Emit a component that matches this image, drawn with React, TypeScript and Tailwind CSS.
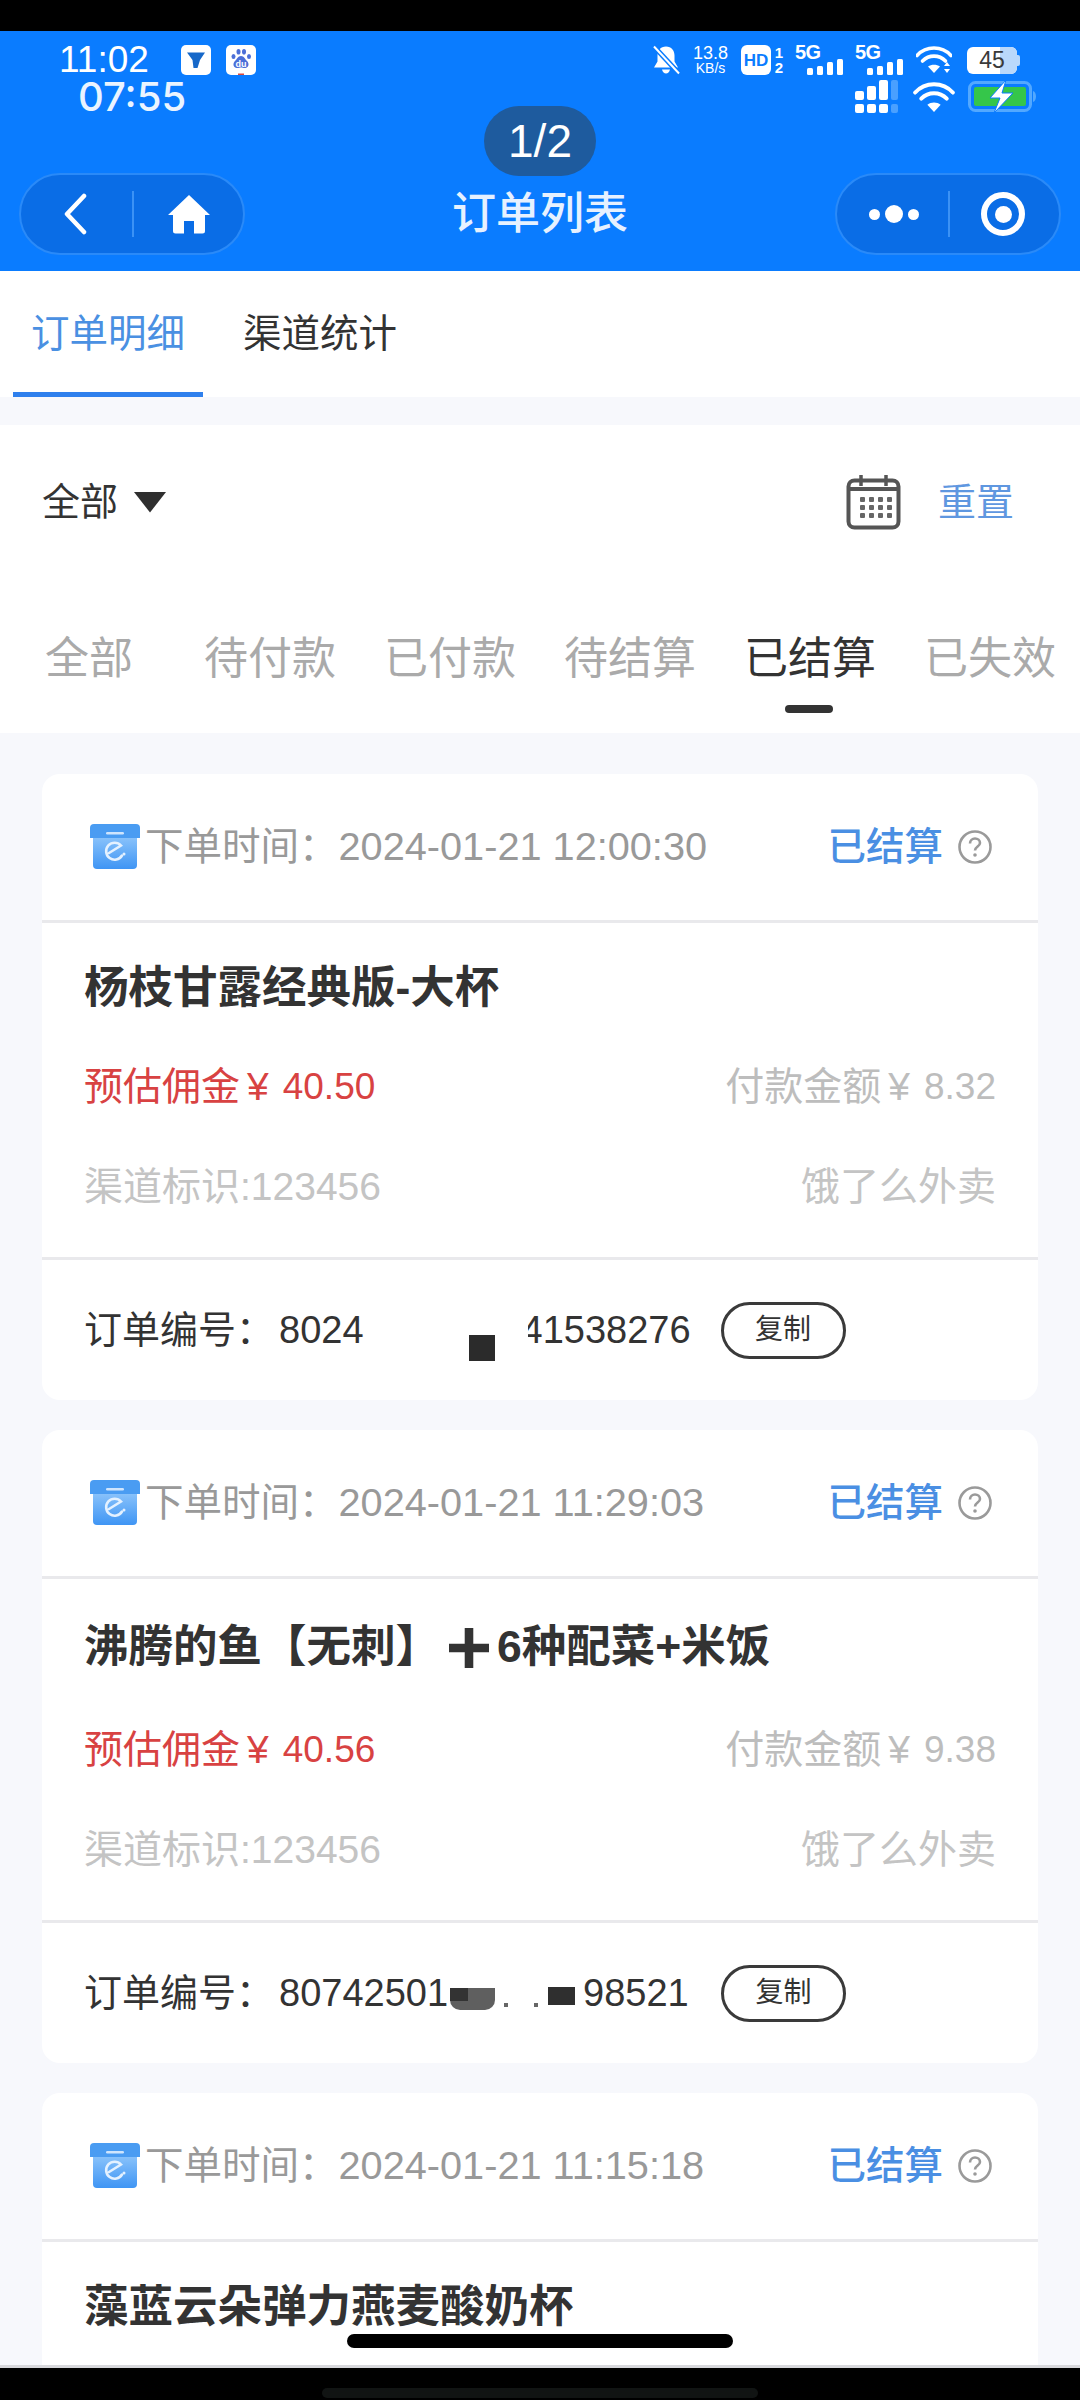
import React from "react";

function Paw() {
  return (
    <svg width="30" height="30" viewBox="0 0 30 30">
      <rect width="30" height="30" rx="5" fill="#fff" />
      <g fill="#4c6fd8">
        <ellipse cx="7.500" cy="11.500" rx="2" ry="2.600" />
        <ellipse cx="12.500" cy="6.800" rx="2" ry="2.800" />
        <ellipse cx="18" cy="6.800" rx="2" ry="2.800" />
        <ellipse cx="23" cy="11.500" rx="2" ry="2.600" />
        <path d="M15 11c3 0 4 3 6 5s2.500 6-1.500 7c-2 .4-3-.5-4.500-.5s-2.500.9-4.500.5c-4-1-3.500-5-1.500-7s3-5 6-5z" />
      </g>
      <text x="15" y="21.500" textAnchor="middle" fontSize="9" fontWeight="700" fill="#fff" fontFamily="Liberation Sans">du</text>
      <rect x="12" y="28.500" width="6" height="1.500" fill="#d9483e" />
    </svg>
  );
}

function Funnel() {
  return (
    <svg width="30" height="30" viewBox="0 0 30 30">
      <rect width="30" height="30" rx="5" fill="#fff" />
      <path d="M6 7.500h18l-5 7.500-2.500 8H12.500l-1-8z" fill="#1668c9" />
    </svg>
  );
}

function MutedBell() {
  return (
    <svg width="30" height="30" viewBox="0 0 30 30">
      <path d="M15 1.500c5.500 0 8.500 4 8.500 9v6l3.500 6H3l3.500-6v-6c0-5 3-9 8.500-9z" fill="#fff" />
      <path d="M11 24.500c.6 2.500 2.200 4 4 4s3.400-1.500 4-4z" fill="#fff" />
      <path d="M3 1.500 28 28.500" stroke="#0a7cff" strokeWidth="5" />
      <path d="M3 1.500 28 28.500" stroke="#fff" strokeWidth="2" />
    </svg>
  );
}

function FiveG() {
  return (
    <div className="relative w-[48px] h-[30px]">
      <span className="absolute left-0 top-[-3px] text-[20px] leading-[20px] font-bold text-white tracking-[-0.5px]">5G</span>
      <svg className="absolute left-[12px] top-[14px]" width="36" height="16" viewBox="0 0 36 16" fill="#fff">
        <rect x="0" y="9" width="6" height="7" rx="1.500" />
        <rect x="10" y="7" width="6" height="9" rx="1.500" />
        <rect x="20" y="3" width="6" height="13" rx="1.500" />
        <rect x="30" y="0" width="6" height="16" rx="1.500" />
      </svg>
    </div>
  );
}

function Wifi({ w, h, tri }: { w: number; h: number; tri?: boolean }) {
  return (
    <svg width={w} height={h} viewBox="0 0 36 28" fill="none" stroke="#fff" strokeWidth="3.600">
      <path d="M1 9.500C10-.5 26-.5 35 9.500" strokeLinecap="round" />
      <path d="M6.500 15c6.500-6.500 16.500-6.500 23 0" strokeLinecap="round" />
      <path d="M18 27l-6-6.500c3.500-2.500 8.500-2.500 12 0z" fill="#fff" stroke="none" />
      {tri && <path d="M28 20l3-4 3 4zM28 23h6l-3 4z" fill="#fff" stroke="none" />}
    </svg>
  );
}

function Signal() {
  return (
    <svg width="44" height="34" viewBox="0 0 44 34" fill="#fff">
      <rect x="0" y="11" width="9" height="9" rx="2" />
      <rect x="12" y="6" width="9" height="14" rx="2" />
      <rect x="24" y="0" width="9" height="20" rx="2" />
      <rect x="36" y="0" width="7" height="20" rx="2" fill="#4aa0ff" />
      <rect x="0" y="24" width="9" height="9" rx="2" />
      <rect x="12" y="24" width="9" height="9" rx="2" />
      <rect x="24" y="24" width="9" height="9" rx="2" />
      <rect x="36" y="24" width="7" height="9" rx="2" fill="#4aa0ff" />
    </svg>
  );
}

function ChargeBattery() {
  return (
    <svg width="72" height="34" viewBox="0 0 72 34">
      <rect x="1.500" y="2.500" width="61" height="28" rx="6" fill="none" stroke="#52a8ff" strokeWidth="3" />
      <rect x="6" y="7" width="52" height="19" rx="2" fill="#35c64a" />
      <path d="M65 11c4 1 4 10 0 11z" fill="#52a8ff" />
      <path d="M38 0 22 18h10l-6 15 19-20H34z" fill="#fff" stroke="#0a7cff" strokeWidth="1" />
    </svg>
  );
}

function Box() {
  return (
    <svg width="50" height="46" viewBox="0 0 50 46" className="shrink-0">
      <defs>
        <linearGradient id="boxg" x1="0" y1="0" x2="0" y2="1">
          <stop offset="0" stopColor="#8cc4fb" />
          <stop offset="1" stopColor="#3f95f4" />
        </linearGradient>
      </defs>
      <path d="M3 12h44v29a4 4 0 0 1-4 4H7a4 4 0 0 1-4-4z" fill="url(#boxg)" />
      <path d="M4 0h42a4 4 0 0 1 4 4v10H0V4a4 4 0 0 1 4-4z" fill="#4a9cf2" />
      <rect x="16" y="8" width="18" height="2.500" rx="1.200" fill="#cfe5fd" />
      <path d="M32 31.500a8.500 8.500 0 1 1-1-10L19 29" fill="none" stroke="#e4f1ff" strokeWidth="2.600" strokeLinecap="round" />
      <circle cx="34" cy="30" r="1.500" fill="#e4f1ff" />
    </svg>
  );
}

function Help() {
  return (
    <svg width="36" height="36" viewBox="0 0 36 36" className="shrink-0 block">
      <circle cx="18" cy="18" r="15.500" fill="none" stroke="#9a9a9a" strokeWidth="2.600" />
      <path d="M13 14.500c0-3 2.300-5 5-5s5 2 5 4.500c0 3.500-5 3.500-5 7.500" fill="none" stroke="#9a9a9a" strokeWidth="2.600" />
      <circle cx="18" cy="26" r="1.800" fill="#9a9a9a" />
    </svg>
  );
}

function Calendar() {
  return (
    <svg width="56" height="56" viewBox="0 0 56 56" fill="none" className="block">
      <rect x="2.500" y="6.500" width="50" height="47" rx="6" stroke="#555" strokeWidth="4" />
      <path d="M2.500 15h50" stroke="#555" strokeWidth="4" />
      <path d="M15 1v11M40 1v11" stroke="#555" strokeWidth="3.500" />
      <g fill="#666">
        {[23, 31, 39].map((y) =>
          [14, 23, 32, 41].map((x) => <rect key={`${x}-${y}`} x={x} y={y} width="5" height="5" rx="1" />)
        )}
      </g>
    </svg>
  );
}

type Order = {
  time: string;
  title: React.ReactNode;
  commission?: string;
  pay?: string;
  order?: React.ReactNode;
  titleH: string;
};

function CopyBtn() {
  return (
    <div className="w-[125px] h-[57px] rounded-full border-[3px] border-[#3a3a3a] flex items-center justify-center text-[28px] text-[#333] shrink-0">
      复制
    </div>
  );
}

function Money({ label, amount }: { label: string; amount: string }) {
  return (
    <span className="flex items-center">
      <span>{label}</span>
      <span className="ml-[7px] mr-[14px]">¥</span>
      <span className="text-[37px]">{amount}</span>
    </span>
  );
}

function Card({ o, partial }: { o: Order; partial?: boolean }) {
  return (
    <div className={partial ? "bg-white rounded-[18px] h-[400px] shrink-0" : "bg-white rounded-[18px] shrink-0"}>
      <div className="h-[149px] border-b-[3px] border-[#e9e9ec] flex items-center pl-[48px] pr-[45px]">
        <Box />
        <span className="ml-[5px] text-[38.500px] text-[#999]">下单时间：</span>
        <span className="text-[39.700px] text-[#999] ml-[1px]">{o.time}</span>
        <span className="ml-auto text-[38.500px] text-[#4a8fe3] font-medium">已结算</span>
        <span className="ml-[14px]"><Help /></span>
      </div>
      <div className="pl-[42px] pr-[42px]">
        <div className={`${o.titleH} pt-[2px] flex items-center text-[44.500px] font-semibold text-[#333] whitespace-nowrap`}>{o.title}</div>
        {!partial && (
          <>
            <div className="h-[72px] flex items-center justify-between text-[39px]">
              <span className="text-[#d84242]"><Money label="预估佣金" amount={`40.${o.commission}`} /></span>
              <span className="text-[#bdbdbd]"><Money label="付款金额" amount={o.pay ?? ""} /></span>
            </div>
            <div className="h-[72px] mt-[28px] mb-[34px] flex items-center justify-between text-[39px] text-[#c4c4c4]">
              <span>渠道标识:123456</span>
              <span>饿了么外卖</span>
            </div>
          </>
        )}
      </div>
      {!partial && (
        <div className="h-[143px] border-t-[3px] border-[#e9e9ec] flex items-center pl-[42px] text-[38px] text-[#333]">
          <span>订单编号：</span>
          {o.order}
        </div>
      )}
    </div>
  );
}

export default function App() {
  return (
    <div className="relative w-[1080px] h-[2400px] overflow-hidden flex flex-col bg-black [font-family:'Liberation_Sans','Noto_Sans_CJK_SC',sans-serif]">
      <div className="h-[31px] bg-black shrink-0" />

      {/* blue header */}
      <div className="relative h-[240px] bg-[#0a7cff] shrink-0 text-white">
        <div className="h-[30px] mt-[14px] flex items-center">
          <span className="ml-[59px] text-[37px] leading-[30px]">11:02</span>
          <span className="ml-[32px]"><Funnel /></span>
          <span className="ml-[15px]"><Paw /></span>
          <span className="ml-auto"><MutedBell /></span>
          <div className="ml-[11px] w-[37px] flex flex-col items-center leading-none">
            <span className="text-[18px] leading-[16px]">13.8</span>
            <span className="text-[14px] leading-[14px]">KB/s</span>
          </div>
          <div className="ml-[12px] w-[30px] h-[30px] rounded-[6px] bg-white flex items-center justify-center text-[#0a7cff] text-[17px] font-bold leading-none">HD</div>
          <div className="ml-[3px] w-[10px] flex flex-col items-center text-[15px] leading-[15px] font-bold">
            <span>1</span>
            <span>2</span>
          </div>
          <span className="ml-[11px]"><FiveG /></span>
          <span className="ml-[12px]"><FiveG /></span>
          <span className="ml-[13px]"><Wifi w={36} h={28} tri /></span>
          <div className="ml-[15px] mr-[60px] flex items-center">
            <div className="relative w-[50px] h-[27px] rounded-[6px] overflow-hidden bg-white flex items-center justify-center">
              <div className="absolute right-0 top-0 bottom-0 w-[17px] bg-[#b9d8fb]" />
              <span className="relative text-[#3a3a3a] text-[23px] leading-none">45</span>
            </div>
            <div className="w-[3px] h-[11px] rounded-r-[2px] bg-[#b9d8fb]" />
          </div>
        </div>
        <div className="h-[34px] mt-[5px] flex items-center">
          <span className="ml-[78px] text-[40px] leading-[34px] font-medium text-[#eaf4ff] [font-family:Inter,sans-serif]">07:55</span>
          <span className="ml-auto"><Signal /></span>
          <span className="ml-[14px]"><Wifi w={42} h={31} /></span>
          <span className="ml-[13px] mr-[40px]"><ChargeBattery /></span>
        </div>
        <div className="absolute left-[484px] top-[75px] w-[112px] h-[70px] rounded-full bg-[#1e5b9e] flex items-center justify-center text-[46px] leading-none">1/2</div>
        <div className="mt-[59px] h-[82px] flex items-center justify-between px-[19px]">
          <div className="w-[226px] h-[82px] rounded-full bg-[#0a6de6] border-[2px] border-[#2a8af8] flex items-center">
            <svg width="26" height="42" viewBox="0 0 26 42" className="ml-[41px]" fill="none">
              <path d="M22 3 5 21l17 18" stroke="#fff" strokeWidth="4.500" strokeLinecap="round" strokeLinejoin="round" />
            </svg>
            <div className="ml-[44px] w-[2px] h-[46px] bg-[#3b92f5]" />
            <svg width="44" height="40" viewBox="0 0 44 40" className="ml-[33px]">
              <path d="M22 1 43 21h-5v16a2.500 2.500 0 0 1-2.500 2.500H27V27h-10v12.500H8.500A2.500 2.500 0 0 1 6 37V21H1z" fill="#fff" />
            </svg>
          </div>
          <div className="text-[44px] leading-none font-medium text-[#e6f1ff]">订单列表</div>
          <div className="w-[226px] h-[82px] rounded-full bg-[#0a6de6] border-[2px] border-[#2a8af8] flex items-center">
            <div className="ml-[32px] flex items-center gap-[5px]">
              <div className="w-[11px] h-[11px] rounded-full bg-white" />
              <div className="w-[18px] h-[18px] rounded-full bg-white" />
              <div className="w-[11px] h-[11px] rounded-full bg-white" />
            </div>
            <div className="ml-[29px] w-[2px] h-[46px] bg-[#3b92f5]" />
            <div className="ml-[31px] w-[44px] h-[44px] rounded-full border-[6px] border-white flex items-center justify-center">
              <div className="w-[17px] h-[17px] rounded-full bg-white" />
            </div>
          </div>
        </div>
      </div>

      {/* page */}
      <div className="relative flex-1 min-h-0 overflow-hidden bg-[#f7f8fc] border-b-[3px] border-[#d8d8dc]">
        <div className="h-[126px] bg-white flex text-[38.500px] leading-none">
          <div className="ml-[13px] w-[190px] border-y-[5px] border-t-transparent border-b-[#2f80ed] flex items-center justify-center text-[#4a90e2]">订单明细</div>
          <div className="ml-[40px] flex items-center text-[#333]">渠道统计</div>
        </div>
        <div className="mt-[28px] bg-white">
          <div className="h-[154px] flex items-center pl-[42px] pr-[66px] text-[38px] text-[#333]">
            <span>全部</span>
            <svg width="34" height="22" viewBox="0 0 34 22" className="ml-[15px]">
              <path d="M1 1h32L17 21.500z" fill="#2f2f2f" />
            </svg>
            <span className="ml-auto"><Calendar /></span>
            <span className="ml-[36px] text-[#5f97e0]">重置</span>
          </div>
          <div className="h-[154px] pt-[6px] flex items-center pl-[45px] text-[44px] text-[#aaa] leading-none">
            <span>全部</span>
            <span className="ml-[71px]">待付款</span>
            <span className="ml-[48px]">已付款</span>
            <span className="ml-[48px]">待结算</span>
            <span className="relative ml-[48px] text-[#333]">
              已结算
              <span className="absolute left-[41px] top-[68px] w-[48px] h-[8px] rounded-full bg-[#333]" />
            </span>
            <span className="ml-[48px]">已失效</span>
          </div>
        </div>

        <div className="pt-[41px] px-[42px] flex flex-col gap-[30px]">
          <Card
            o={{
              time: "2024-01-21 12:00:30",
              titleH: "h-[128px]",
              title: "杨枝甘露经典版-大杯",
              commission: "50",
              pay: "8.32",
              order: (
                <>
                  <span className="ml-[5px]">8024</span>
                  <span className="relative ml-[158px] w-[169px]">
                    <span>41538276</span>
                    <span className="absolute left-[-3px] top-0 bottom-0 w-[9px] bg-white" />
                  </span>
                  <span className="ml-[30px]"><CopyBtn /></span>
                </>
              ),
            }}
          />
          <Card
            o={{
              time: "2024-01-21 11:29:03",
              titleH: "h-[135px]",
              title: (
                <>
                  沸腾的鱼【无刺】
                  <svg width="40" height="40" viewBox="0 0 42 42" className="ml-[9px] mr-[8px] shrink-0">
                    <path d="M16.500 0h9v16.500H42v9H25.500V42h-9V25.500H0v-9h16.500z" fill="#333" />
                  </svg>
                  6种配菜+米饭
                </>
              ),
              commission: "56",
              pay: "9.38",
              order: (
                <>
                  <span className="ml-[5px] w-[169px]">80742501</span>
                  <span className="relative w-[135px] h-[40px]">
                    <span className="absolute left-[2px] top-[15px] w-[45px] h-[22px] rounded-b-[10px] bg-[#5f5f5f]" />
                    <span className="absolute left-[2px] top-[15px] w-[18px] h-[13px] bg-[#333]" />
                    <span className="absolute left-[56px] top-[30px] w-[4px] h-[4px] bg-[#666]" />
                    <span className="absolute left-[86px] top-[30px] w-[4px] h-[4px] bg-[#666]" />
                    <span className="absolute left-[100px] top-[14px] w-[27px] h-[18px] bg-[#2f2f2f]" />
                  </span>
                  <span className="w-[106px]">98521</span>
                  <span className="ml-[32px]"><CopyBtn /></span>
                </>
              ),
            }}
          />
          <Card
            partial
            o={{
              time: "2024-01-21 11:15:18",
              titleH: "h-[128px]",
              title: "藻蓝云朵弹力燕麦酸奶杯",
            }}
          />
        </div>

        {/* redaction square on the first order number */}
        <div className="absolute left-[469px] top-[1064px] w-[26px] h-[26px] bg-[#2b2b2b]" />
        {/* gesture pill */}
        <div className="absolute left-[347px] top-[2063px] w-[386px] h-[14px] rounded-full bg-black" />
      </div>

      <div className="h-[32px] bg-black shrink-0 flex justify-center items-start">
        <div className="mt-[20px] w-[436px] h-[10px] rounded-full bg-[#111413]" />
      </div>
    </div>
  );
}
